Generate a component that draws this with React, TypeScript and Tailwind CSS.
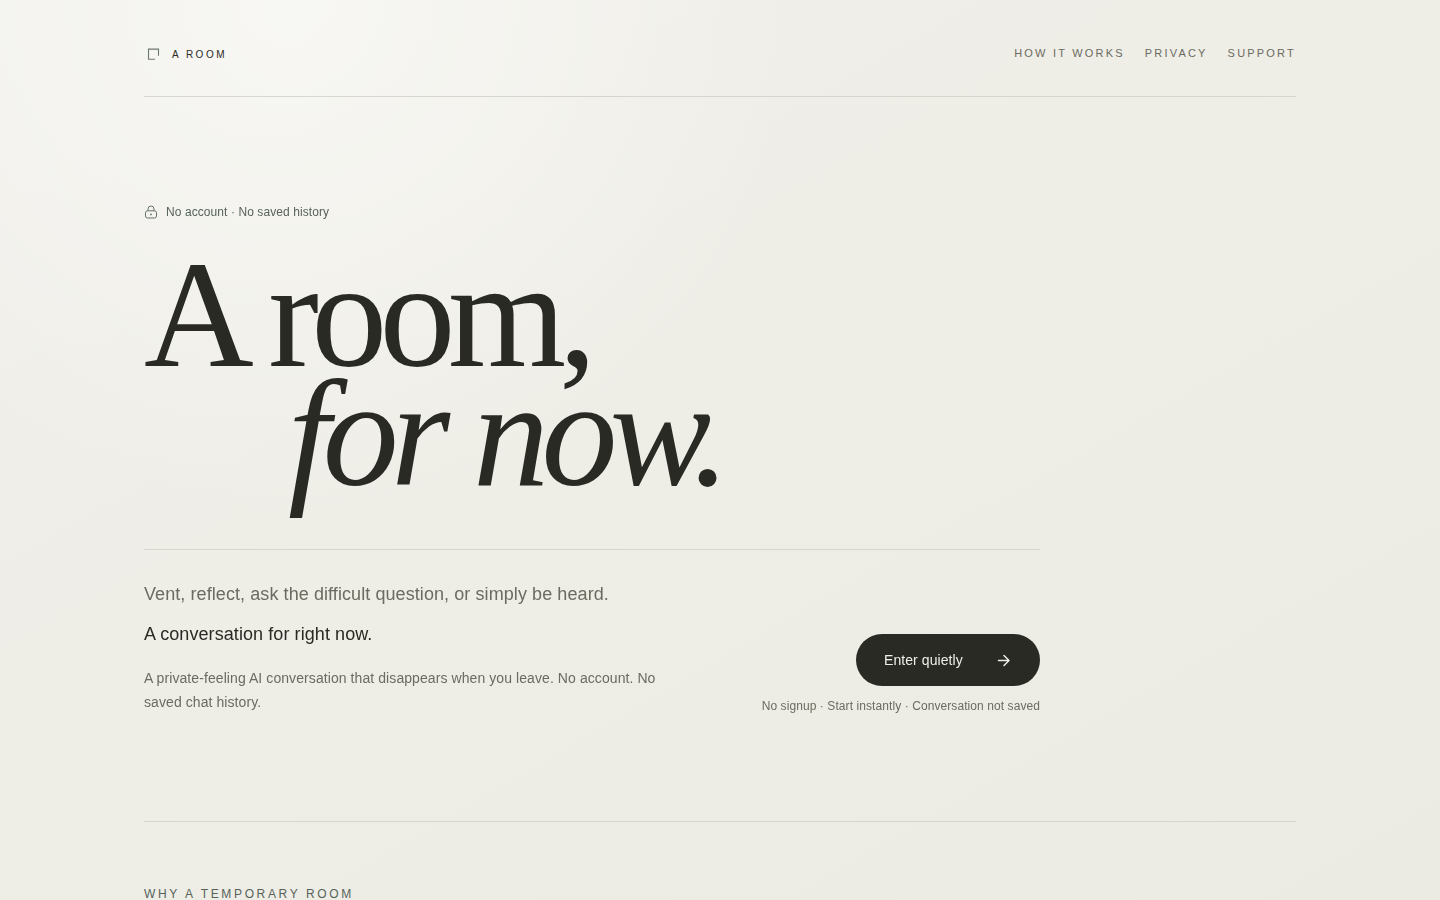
const NAV_LINKS = [
  { label: 'How it works', href: '#how-it-works' },
  { label: 'Privacy', href: '#privacy' },
  { label: 'Support', href: '#support' },
];

const IconRoom = ({ className = 'size-5' }: { className?: string }) => (
  <svg className={className} fill="none" stroke="currentColor" viewBox="0 0 20 20" aria-hidden>
    <path strokeWidth={1.1} d="M4.500 14.800V4.100H14.500V10.800M4.500 14.300H11" />
  </svg>
);

const IconLock = ({ className = 'size-4' }: { className?: string }) => (
  <svg className={className} fill="none" stroke="currentColor" viewBox="0 0 14 14" aria-hidden>
    <rect x="1.500" y="5.800" width="11" height="7.200" rx="2" />
    <path d="M4 5.800V4a3 3 0 0 1 6 0v1.800" />
    <circle cx="7" cy="9.400" r="0.900" fill="currentColor" stroke="none" />
  </svg>
);

const IconArrow = ({ className = 'size-4' }: { className?: string }) => (
  <svg className={className} fill="none" stroke="currentColor" viewBox="0 0 16 16" aria-hidden>
    <path strokeLinecap="round" strokeLinejoin="round" strokeWidth={1.5} d="M2.500 8.500h10.200M8 3.500l5 5-5 5" />
  </svg>
);

function Header() {
  return (
    <header className="flex items-start justify-between border-b border-[#d6d6ce] pt-10 pb-[26px]">
      <a href="#top" className="flex h-[30px] items-center gap-2 text-[#292a24]">
        <IconRoom className="size-5 text-[#6c776f]" />
        <span className="text-[10px] leading-[18px] font-medium tracking-[0.25em] uppercase">A Room</span>
      </a>
      <nav className="flex gap-5 text-[11px] leading-[26px] tracking-[0.2em] text-[#6b6b61] uppercase">
        {NAV_LINKS.map((link) => (
          <a key={link.href} href={link.href}>{link.label}</a>
        ))}
      </nav>
    </header>
  );
}

function Hero() {
  return (
    <section className="max-w-4xl pt-[103px] pb-[107px] will-change-transform">
      <p className="flex items-center gap-2 text-xs leading-6 text-[#56635a]">
        <IconLock className="size-[14px] text-[#66736a]" />
        No account · No saved history
      </p>

      <h1 className="mt-8 font-['Liberation_Serif',serif] text-[152px] leading-[119px] tracking-[-0.05em] text-[#292a24]">
        <span className="block">A room,</span>
        <em className="block pl-36">for now.</em>
      </h1>

      <div className="mt-[55px] flex items-end justify-between gap-16 border-t border-[#d6d6ce] pt-7">
        <div className="max-w-[540px]">
          <p className="text-lg leading-8 text-[#6b6b61]">
            Vent, reflect, ask the difficult question, or simply be heard.
          </p>
          <p className="mt-2 text-lg leading-8 text-[#292a24]">A conversation for right now.</p>
          <p className="mt-4 text-sm leading-6 text-[#6b6b61]">
            A private-feeling AI conversation that disappears when you leave. No account. No saved chat history.
          </p>
        </div>
        <div className="flex shrink-0 flex-col items-end gap-3">
          <button
            type="button"
            className="flex h-[52px] w-[184px] items-center justify-between rounded-full bg-[#292a24] px-7 text-sm tracking-[inherit] text-[#efeee7]"
          >
            Enter quietly
            <IconArrow />
          </button>
          <p className="text-xs leading-4 text-[#6b6b61]">No signup · Start instantly · Conversation not saved</p>
        </div>
      </div>
    </section>
  );
}

export default function App() {
  return (
    <div
      id="top"
      className="min-h-screen bg-[radial-gradient(circle_at_20%_0%,rgba(255,255,252,0.52),transparent_36%),linear-gradient(150deg,#f1f0ec,#eeede6_45%,#ebebe3)] font-['Liberation_Sans',sans-serif] tracking-[0.005em]"
    >
      <div className="mx-auto max-w-6xl">
        <Header />
        <main>
          <Hero />
          <section className="border-t border-[#d6d6ce] pt-16">
            <h2 className="text-xs leading-4 tracking-[0.22em] text-[#56635a] uppercase">Why a temporary room</h2>
          </section>
        </main>
      </div>
    </div>
  );
}
